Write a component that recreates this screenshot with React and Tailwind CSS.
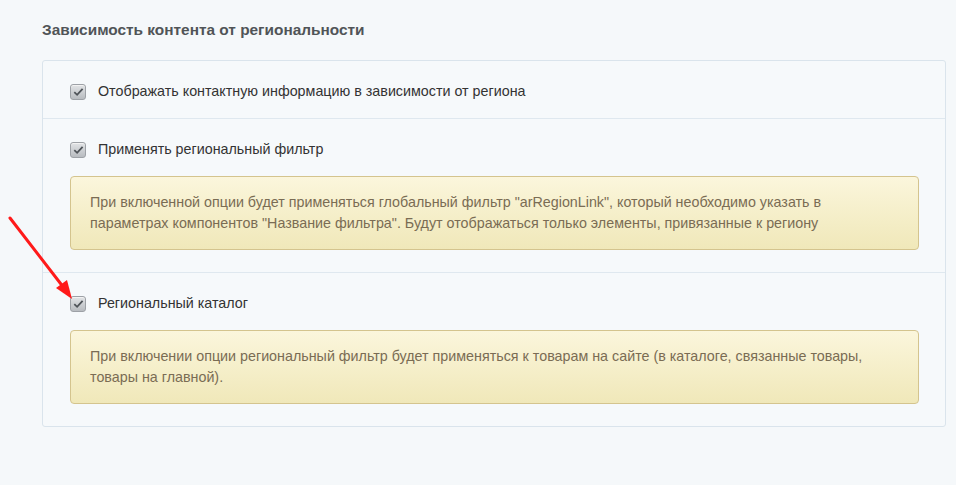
import React from 'react';

const font = { fontFamily: '"Liberation Sans", Arial, sans-serif' };

const Check = () => (
  <span className="w-4 h-4 shrink-0 rounded-[3px] border border-[#9da1a6] bg-gradient-to-b from-[#e2e4e6] to-[#b8bcc0] flex items-center justify-center shadow-[inset_0_1px_0_#f2f2f2]">
    <svg width="11" height="10" viewBox="0 0 11 10">
      <path d="M1.3 5.2 L4.1 7.8 L9.6 1.8" fill="none" stroke="#4f5459" strokeWidth="1.8" />
    </svg>
  </span>
);

const Note = ({ children }) => (
  <div className="mt-[17px] rounded-[4px] border border-[#d4c48e] bg-gradient-to-b from-[#fbf6dc] to-[#f0e8b9] pl-[19px] pr-[24px] pt-[15px] pb-[15px] text-[14.3px] leading-[21px] text-[#7a6c54]">
    {children}
  </div>
);

const Row = ({ label, note, last }) => (
  <div className={`pl-[27px] pr-[26px] pt-[22px] ${note ? 'pb-[22px]' : 'pb-[17px]'} ${last ? '' : 'border-b border-[#dfe8ef]'}`}>
    <label className="flex items-center gap-3 h-[18px] text-[14.3px] text-[#333]">
      <Check />
      <span>{label}</span>
    </label>
    {note && <Note>{note}</Note>}
  </div>
);

export default function App() {
  return (
    <div className="relative min-h-[485px] bg-[#f5f8fa] pl-[42px] pr-[10px] pt-[20px]" style={font}>
      <h2 className="text-[15.4px] font-bold text-[#505457] leading-[20px] mb-[20px]">Зависимость контента от региональности</h2>
      <div className="w-[904px] rounded-[3px] border border-[#dae4ec] bg-[#f6f9fb]">
        <Row label="Отображать контактную информацию в зависимости от региона" />
        <Row
          label="Применять региональный фильтр"
          note={'При включенной опции будет применяться глобальный фильтр "arRegionLink", который необходимо указать в параметрах компонентов "Название фильтра". Будут отображаться только элементы, привязанные к региону'}
        />
        <Row
          label="Региональный каталог"
          note="При включении опции региональный фильтр будет применяться к товарам на сайте (в каталоге, связанные товары, товары на главной)."
          last
        />
      </div>
      <svg className="absolute left-0 top-0 pointer-events-none" width="100" height="320" viewBox="0 0 100 320">
        <line x1="10" y1="218" x2="64" y2="288" stroke="#ff1a1a" strokeWidth="3" strokeLinecap="round" />
        <polygon points="72,299 56,288 67,280" fill="#ff1a1a" />
      </svg>
    </div>
  );
}
